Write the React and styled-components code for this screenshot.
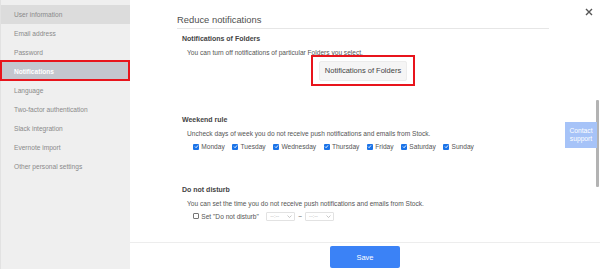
import React from "react";
import styled, { createGlobalStyle } from "styled-components";

const Global = createGlobalStyle`
  html, body { margin: 0; padding: 0; background: #fff; }
  body { font-family: "Liberation Sans", Arial, sans-serif; }
  #root { width: 600px; height: 269px; overflow: hidden; }
`;

const Page = styled.div`
  position: relative;
  display: flex;
  width: 600px;
  height: 269px;
  overflow: hidden;
`;

const Sidebar = styled.nav`
  width: 130px;
  flex: none;
  background: #efefef;
  border-left: 1px solid #e2e2e2;
  padding-top: 5px;
  box-sizing: border-box;
  display: flex;
  flex-direction: column;
`;

const NavItem = styled.div`
  position: relative;
  height: 19px;
  line-height: 19px;
  padding-left: 13px;
  font-size: 6.6px;
  color: ${(p) => (p.$active ? "#fff" : "#8a8a8a")};
  font-weight: ${(p) => (p.$active ? 700 : 400)};
  background: ${(p) => (p.$active ? "#c4c6ce" : p.$first ? "#dcdcdc" : "transparent")};
  ${(p) =>
    p.$active &&
    `
    &::after {
      content: "";
      position: absolute;
      top: -2px; left: -1px; right: 0; bottom: 0;
      border: 2px solid #e8141c;
    }
  `}
`;

const Main = styled.main`
  flex: 1;
  display: flex;
  flex-direction: column;
  min-width: 0;
`;

const Content = styled.div`
  flex: 1;
  padding: 14px 51px 0 47px;
  overflow: hidden;
`;

const Title = styled.h1`
  margin: 0;
  font-size: 9.4px;
  line-height: 11px;
  font-weight: 400;
  color: #505050;
  padding-bottom: 3px;
  border-bottom: 1.5px solid #e6e6e6;
`;

const Section = styled.section`
  margin-top: ${(p) => p.$top}px;
  padding-left: 5px;
`;

const Heading = styled.h2`
  margin: 0;
  font-size: 7px;
  line-height: 9px;
  font-weight: 700;
  color: #444;
`;

const Desc = styled.p`
  margin: ${(p) => p.$mt || 5}px 0 0;
  padding-left: 5px;
  font-size: 6.6px;
  line-height: 9px;
  color: #555;
`;

const ButtonRow = styled.div`
  display: flex;
  justify-content: center;
  margin-top: 3.5px;
  margin-left: -5px;
`;

const Marked = styled.span`
  position: relative;
  display: inline-flex;
  &::after {
    content: "";
    position: absolute;
    top: -6px; bottom: -5px; left: -8px; right: -8px;
    border: 2px solid #e8141c;
    pointer-events: none;
  }
`;

const GhostButton = styled.button`
  width: 88px;
  height: 20px;
  padding: 0;
  border: 1px solid #ececec;
  border-radius: 2px;
  background: #f5f5f5;
  color: #444;
  font-family: inherit;
  font-size: 7.5px;
`;

const CheckRow = styled.div`
  display: flex;
  align-items: center;
  height: 9px;
  margin-top: 4px;
  padding-left: 11px;
`;

const CheckLabel = styled.label`
  display: inline-flex;
  align-items: center;
  margin-right: ${(p) => p.$mr ?? 7.5}px;
  font-size: 6.6px;
  color: #555;
  white-space: nowrap;
`;

const Box = styled.span`
  width: 6px;
  height: 6px;
  margin-right: 2.3px;
  box-sizing: border-box;
  border-radius: 1px;
  display: inline-flex;
  align-items: center;
  justify-content: center;
  background: ${(p) => (p.$checked ? "#1a73e8" : "#fff")};
  border: ${(p) => (p.$checked ? "none" : "0.8px solid #777")};
`;

const TimeSelect = styled.span`
  display: inline-flex;
  align-items: center;
  justify-content: space-between;
  width: 29px;
  height: 9px;
  box-sizing: border-box;
  padding: 0 2px 0 3px;
  border: 1px solid #e2e2e2;
  border-radius: 1px;
  font-size: 5.5px;
  color: #b5b5b5;
`;

const Tilde = styled.span`
  font-size: 6.5px;
  color: #666;
  margin: 0 3px;
`;

const Footer = styled.footer`
  height: 27px;
  box-sizing: border-box;
  border-top: 1px solid #ededed;
  display: flex;
  justify-content: center;
  padding-top: 3px;
`;

const SaveButton = styled.button`
  width: 70px;
  height: 22px;
  border: none;
  border-radius: 2px;
  background: #3b82f6;
  color: #fff;
  font-family: inherit;
  font-size: 7.5px;
  padding: 0;
`;

const Close = styled.button`
  position: absolute;
  top: 8px;
  left: 585px;
  width: 8px;
  height: 8px;
  padding: 0;
  border: none;
  background: none;
  display: flex;
`;

const Scrollbar = styled.div`
  position: absolute;
  left: 596px;
  top: 100px;
  width: 3px;
  height: 87px;
  background: #b3b3b3;
  border-radius: 1px;
`;

const Contact = styled.div`
  position: absolute;
  left: 565px;
  top: 122px;
  width: 32px;
  height: 26px;
  background: #a6c3f8;
  color: #fff;
  font-size: 6.7px;
  line-height: 8.5px;
  text-align: center;
  display: flex;
  flex-direction: column;
  justify-content: center;
`;

const Check = ({ checked }) => (
  <Box $checked={checked}>
    {checked && (
      <svg width="5" height="5" viewBox="0 0 10 10">
        <path d="M2 5.2 L4.2 7.4 L8 2.8" fill="none" stroke="#fff" strokeWidth="1.8" />
      </svg>
    )}
  </Box>
);

const Chevron = () => (
  <svg width="5" height="3" viewBox="0 0 10 6">
    <path d="M1 1 L5 5 L9 1" fill="none" stroke="#aaa" strokeWidth="1.3" />
  </svg>
);

const navItems = [
  "User information",
  "Email address",
  "Password",
  "Notifications",
  "Language",
  "Two-factor authentication",
  "Slack integration",
  "Evernote import",
  "Other personal settings",
];

const days = ["Monday", "Tuesday", "Wednesday", "Thursday", "Friday", "Saturday", "Sunday"];

export default function App() {
  return (
    <Page>
      <Global />
      <Sidebar>
        {navItems.map((n, i) => (
          <NavItem key={n} $first={i === 0} $active={n === "Notifications"}>
            {n}
          </NavItem>
        ))}
      </Sidebar>
      <Main>
        <Content>
          <Title>Reduce notifications</Title>
          <Section $top={5}>
            <Heading>Notifications of Folders</Heading>
            <Desc>You can turn off notifications of particular Folders you select.</Desc>
            <ButtonRow>
              <Marked>
                <GhostButton>Notifications of Folders</GhostButton>
              </Marked>
            </ButtonRow>
          </Section>
          <Section $top={34.5}>
            <Heading>Weekend rule</Heading>
            <Desc>Uncheck days of week you do not receive push notifications and emails from Stock.</Desc>
            <CheckRow>
              {days.map((d) => (
                <CheckLabel key={d}>
                  <Check checked />
                  {d}
                </CheckLabel>
              ))}
            </CheckRow>
          </Section>
          <Section $top={33.5}>
            <Heading>Do not disturb</Heading>
            <Desc>You can set the time you do not receive push notifications and emails from Stock.</Desc>
            <CheckRow>
              <CheckLabel>
                <Check />
                Set "Do not disturb"
              </CheckLabel>
              <TimeSelect>
                --:--
                <Chevron />
              </TimeSelect>
              <Tilde>~</Tilde>
              <TimeSelect>
                --:--
                <Chevron />
              </TimeSelect>
            </CheckRow>
          </Section>
        </Content>
        <Footer>
          <SaveButton>Save</SaveButton>
        </Footer>
      </Main>
      <Close aria-label="Close">
        <svg width="8" height="8" viewBox="0 0 8 8">
          <path d="M1 1 L7 7 M7 1 L1 7" stroke="#555" strokeWidth="1.4" />
        </svg>
      </Close>
      <Scrollbar />
      <Contact>
        <span>Contact</span>
        <span>support</span>
      </Contact>
    </Page>
  );
}
